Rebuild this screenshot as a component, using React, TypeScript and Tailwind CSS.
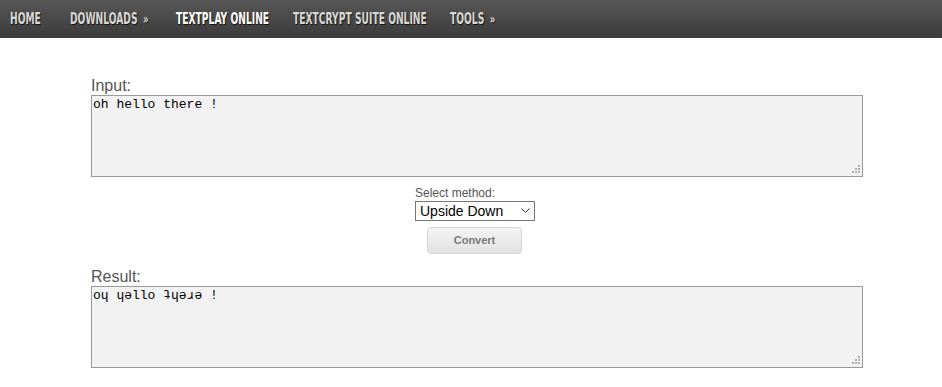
import { useState } from "react";

const navItems = [
  { label: "HOME", arrow: false, active: false, width: "w-[60px]" },
  { label: "DOWNLOADS", arrow: true, active: false, width: "w-[106px]" },
  { label: "TEXTPLAY ONLINE", arrow: false, active: true, width: "w-[117px]" },
  { label: "TEXTCRYPT SUITE ONLINE", arrow: false, active: false, width: "w-[157px]" },
  { label: "TOOLS", arrow: true, active: false, width: "w-[60px]" },
];

function Grip() {
  return (
    <div className="pointer-events-none absolute bottom-[4px] right-[3px] grid grid-cols-3 gap-[1px]">
      <span className="h-[2px] w-[2px]" />
      <span className="h-[2px] w-[2px]" />
      <span className="h-[2px] w-[2px] bg-[#b0b0b0]" />
      <span className="h-[2px] w-[2px]" />
      <span className="h-[2px] w-[2px] bg-[#b0b0b0]" />
      <span className="h-[2px] w-[2px] bg-[#b0b0b0]" />
      <span className="h-[2px] w-[2px] bg-[#b0b0b0]" />
      <span className="h-[2px] w-[2px] bg-[#b0b0b0]" />
      <span className="h-[2px] w-[2px] bg-[#b0b0b0]" />
    </div>
  );
}

export default function App() {
  const [input, setInput] = useState("oh hello there !");
  const [method, setMethod] = useState("Upside Down");

  return (
    <div className="min-h-[387px] bg-white font-['Liberation_Sans',Arial,sans-serif]">
      <nav className="flex h-[38px] items-center bg-gradient-to-b from-[#575757] to-[#3b3b3b] pl-[10px]">
        {navItems.map((item) => (
          <a
            key={item.label}
            href="#"
            className={`${item.width} shrink-0 font-['DejaVu_Sans_Condensed','DejaVu_Sans',sans-serif] text-[15px] font-bold [text-shadow:1px_1px_1px_#111] ${
              item.active ? "text-white" : "text-[#d8d8d8]"
            }`}
          >
            {/* no condensed display font offline, so squeeze the bold face */}
            <span className="inline-block origin-left scale-x-[0.68] whitespace-nowrap">
              {item.label}
              {item.arrow && <span className="ml-[8px] text-[14px]">»</span>}
            </span>
          </a>
        ))}
      </nav>

      <div className="ml-[91px] w-[772px] pt-[38px]">
        <label className="block text-[16px] leading-[19px] text-[#555]">Input:</label>
        <div className="relative">
          <textarea
            value={input}
            onChange={(e) => setInput(e.target.value)}
            className="block h-[82px] w-full resize-none border border-[#9a9a9a] bg-[#f2f2f2] px-[1px] pt-[1px] font-['Liberation_Mono','Courier_New',monospace] text-[13px] leading-[15px] text-black outline-none"
          />
          <Grip />
        </div>

        <div className="mt-[9px] ml-[324px] flex w-[120px] flex-col">
          <span className="text-[12px] leading-[14px] text-[#555]">Select method:</span>
          <div className="relative mt-[1px]">
            <select
              value={method}
              onChange={(e) => setMethod(e.target.value)}
              className="block h-[20px] w-[120px] appearance-none border border-[#767676] bg-white pl-[4px] text-[14px] leading-[18px] text-black outline-none"
            >
              <option>Upside Down</option>
              <option>Reverse</option>
              <option>Mirror</option>
            </select>
            <svg
              className="pointer-events-none absolute right-[5px] top-[7px]"
              width="9"
              height="6"
              viewBox="0 0 9 6"
            >
              <path d="M0.5 0.5 L4.5 4.5 L8.5 0.5" fill="none" stroke="#333" strokeWidth="1" />
            </svg>
          </div>
          <button className="ml-[12px] mt-[6px] h-[27px] w-[95px] rounded-[4px] border border-[#d6d6d6] bg-gradient-to-b from-[#f4f4f4] to-[#e2e2e2] text-[11px] font-bold text-[#7a7a7a]">
            Convert
          </button>
        </div>

        <label className="mt-[13px] block text-[16px] leading-[19px] text-[#555]">Result:</label>
        <div className="relative">
          <textarea
            readOnly
            value="oɥ ɥǝllo ʇɥǝɹǝ !"
            className="block h-[82px] w-full resize-none border border-[#9a9a9a] bg-[#f2f2f2] px-[1px] pt-[1px] font-['Liberation_Mono','Courier_New',monospace] text-[13px] leading-[15px] text-black outline-none"
          />
          <Grip />
        </div>
      </div>
    </div>
  );
}
